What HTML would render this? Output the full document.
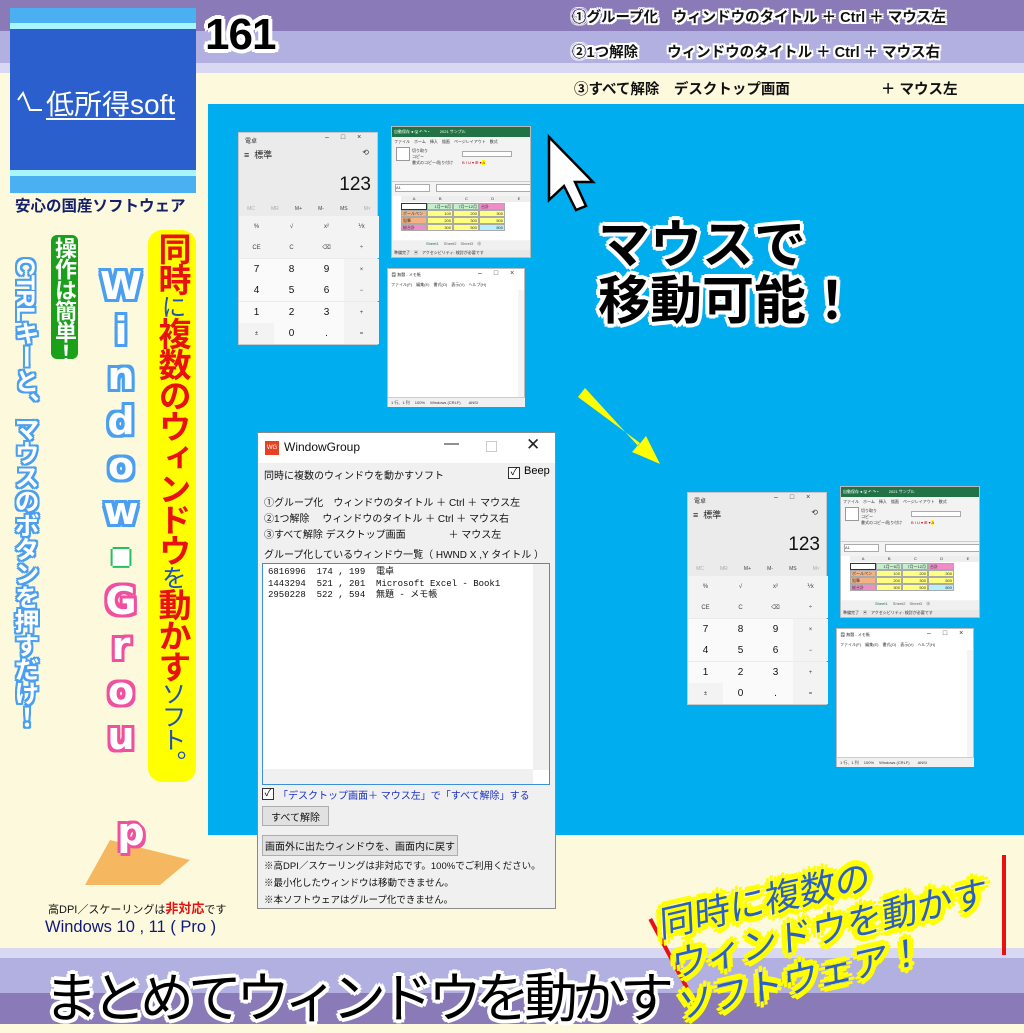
<!DOCTYPE html>
<html><head><meta charset="utf-8">
<style>
*{margin:0;padding:0;box-sizing:border-box}
body{width:1024px;height:1024px;overflow:hidden;position:relative;background:#fdf9dc;font-family:"Liberation Sans","Noto Sans CJK JP",sans-serif}
.a{position:absolute;white-space:nowrap}
.wo{text-shadow:2px 0 #fff,-2px 0 #fff,0 2px #fff,0 -2px #fff,2px 2px #fff,-2px -2px #fff,2px -2px #fff,-2px 2px #fff}
.wo3{text-shadow:3px 0 #fff,-3px 0 #fff,0 3px #fff,0 -3px #fff,3px 3px #fff,-3px -3px #fff,3px -3px #fff,-3px 3px #fff,4px 0 #fff,-4px 0 #fff,0 4px #fff,0 -4px #fff}
.grp{position:absolute;width:300px;height:290px}
.calc{position:absolute;left:0;top:0;width:140px;height:213px;background:#ebebeb;border:1px solid #c8c8c8;font-size:6px;color:#333}
.cb{position:absolute;width:35px;height:21px;display:flex;align-items:center;justify-content:center;font-size:6px;color:#444}
.cb.n{background:#fafafa;font-size:10px;color:#111}
.cb.o{background:#f3f3f3}
.xl{position:absolute;left:153px;top:-6px;width:140px;height:132px;background:#f3f3f3;border:1px solid #bbb;overflow:hidden;font-size:4px;color:#333}
.cell{position:absolute;height:7px;border:0.5px solid #aaa;font-size:4px;line-height:6px;padding:0 1px;text-align:right}
.np{position:absolute;left:149px;top:136px;width:138px;height:139px;background:#fff;border:1px solid #bbb;font-size:4px;color:#333}
.ctl{font-size:7px;letter-spacing:12px}
.dl{font-size:10px;color:#111;position:absolute;left:6px;white-space:pre}
.btn{position:absolute;background:#e1e1e1;border:1px solid #adadad;font-size:10px;display:flex;align-items:center;justify-content:center;color:#111;white-space:nowrap}
</style></head><body>
<div class="a" style="left:0;top:0;width:1024px;height:31px;background:#8a7ab8"></div>
<div class="a" style="left:0;top:31px;width:1024px;height:32px;background:#b2b0e0"></div>
<div class="a" style="left:0;top:63px;width:1024px;height:10px;background:#d8d8f2"></div>
<div class="a" style="left:0;top:948px;width:1024px;height:10px;background:#d8d8f2"></div>
<div class="a" style="left:0;top:958px;width:1024px;height:35px;background:#b2b0e0"></div>
<div class="a" style="left:0;top:993px;width:1024px;height:31px;background:#8a7ab8"></div>

<div class="a" style="left:10px;top:8px;width:186px;height:185px;background:#4ab0f2"></div>
<div class="a" style="left:10px;top:23px;width:186px;height:6px;background:#a8f4ff"></div>
<div class="a" style="left:10px;top:29px;width:186px;height:141px;background:#2b5fcd"></div>
<div class="a" style="left:10px;top:170px;width:186px;height:6px;background:#a8f4ff"></div>
<svg class="a" style="left:16px;top:88px" width="28" height="26"><path d="M2 12 L7 5 L14 22 L26 22" fill="none" stroke="#fff" stroke-width="2"/></svg>
<div class="a" style="left:46px;top:83px;color:#fff;font-size:28px;text-decoration:underline;text-underline-offset:4px;text-decoration-thickness:2px">低所得soft</div>
<div class="a" style="left:15px;top:194px;color:#15206a;font-size:15.5px;font-weight:bold">安心の国産ソフトウェア</div>

<div class="a wo3" style="left:205px;top:10px;font-size:44px;font-weight:bold;color:#000;letter-spacing:-1px">161</div>

<div class="a wo" style="left:572px;top:6px;font-size:14.5px;font-weight:bold;color:#111;white-space:pre">①グループ化　ウィンドウのタイトル ＋ Ctrl ＋ マウス左</div>
<div class="a wo" style="left:572px;top:41px;font-size:14.5px;font-weight:bold;color:#111;white-space:pre">②1つ解除　　ウィンドウのタイトル ＋ Ctrl ＋ マウス右</div>
<div class="a" style="left:574px;top:78px;font-size:14.5px;font-weight:bold;color:#111;white-space:pre">③すべて解除　デスクトップ画面　　　　　　 ＋ マウス左</div>

<div class="a" style="left:208px;top:104px;width:816px;height:731px;background:#00adef"></div>

<div class="grp" style="left:238px;top:132px">
 <div class="calc">
  <div class="a" style="left:6px;top:3px">電卓</div>
  <div class="a ctl" style="left:86px;top:1px">–□×</div>
  <div class="a" style="left:5px;top:15px;font-size:9px;color:#222">≡&nbsp; 標準</div>
  <div class="a" style="right:8px;top:15px;font-size:8px">⟲</div>
  <div class="a" style="right:6px;top:41px;font-size:19px;color:#111">123</div>
  <div class="a" style="left:0;top:73px;width:140px;font-size:5px;display:flex;justify-content:space-around;color:#444"><span style="color:#aaa">MC</span><span style="color:#aaa">MR</span><span>M+</span><span>M-</span><span>MS</span><span style="color:#aaa">M˅</span></div>
  <div class="cb o" style="left:0;top:83px">%</div><div class="cb o" style="left:35px;top:83px">√</div><div class="cb o" style="left:70px;top:83px">x²</div><div class="cb o" style="left:105px;top:83px">⅟x</div>
  <div class="cb o" style="left:0;top:104px">CE</div><div class="cb o" style="left:35px;top:104px">C</div><div class="cb o" style="left:70px;top:104px">⌫</div><div class="cb o" style="left:105px;top:104px">÷</div>
  <div class="cb n" style="left:0;top:126px">7</div><div class="cb n" style="left:35px;top:126px">8</div><div class="cb n" style="left:70px;top:126px">9</div><div class="cb o" style="left:105px;top:126px">×</div>
  <div class="cb n" style="left:0;top:147px">4</div><div class="cb n" style="left:35px;top:147px">5</div><div class="cb n" style="left:70px;top:147px">6</div><div class="cb o" style="left:105px;top:147px">−</div>
  <div class="cb n" style="left:0;top:169px">1</div><div class="cb n" style="left:35px;top:169px">2</div><div class="cb n" style="left:70px;top:169px">3</div><div class="cb o" style="left:105px;top:169px">+</div>
  <div class="cb o" style="left:0;top:190px">±</div><div class="cb n" style="left:35px;top:190px">0</div><div class="cb n" style="left:70px;top:190px">.</div><div class="cb o" style="left:105px;top:190px">=</div>
 </div>
 <div class="xl">
  <div class="a" style="left:0;top:0;width:140px;height:10px;background:#217346;color:#fff;padding:2px">自動保存 ● 🖫 ↶ ↷ ▾ 　　 2021 サンプル</div>
  <div class="a" style="left:2px;top:12px">ファイル　ホーム　挿入　描画　ページレイアウト　数式</div>
  <div class="a" style="left:4px;top:20px;width:14px;height:14px;border:1px solid #999;background:#fff"></div>
  <div class="a" style="left:20px;top:21px;line-height:6px">切り取り<br>コピー<br>書式のコピー/貼り付け</div>
  <div class="a" style="left:70px;top:24px;width:50px;height:6px;border:0.5px solid #aaa;background:#fff"></div>
  <div class="a" style="left:70px;top:33px;color:#c00">B I U ▾ ⊞ ▾ <span style="background:#ff0">A</span></div>
  <div class="a" style="left:0;top:54px;width:140px;height:0.5px;background:#ccc"></div>
  <div class="a" style="left:3px;top:57px;width:35px;height:8px;background:#fff;border:0.5px solid #aaa">A1</div>
  <div class="a" style="left:44px;top:57px;width:96px;height:8px;background:#fff;border:0.5px solid #aaa"></div>
  <div class="a" style="left:0;top:69px;width:140px;height:44px;background:#fff"></div>
  <div class="a" style="left:9px;top:69px;width:131px;height:6px;background:#eee;font-size:4px;display:flex;justify-content:space-around"><span>A</span><span>B</span><span>C</span><span>D</span><span>E</span></div>
  <div class="cell" style="left:9px;top:76px;width:26px;background:#fff;border:1px solid #333"></div>
  <div class="cell" style="left:35px;top:76px;width:26px;background:#c6efce">1月〜6月</div>
  <div class="cell" style="left:61px;top:76px;width:26px;background:#c6efce">7月〜12月</div>
  <div class="cell" style="left:87px;top:76px;width:26px;background:#f08cc8;text-align:left">合計</div>
  <div class="cell" style="left:9px;top:83px;width:26px;background:#f4b183;text-align:left">ボールペン</div>
  <div class="cell" style="left:35px;top:83px;width:26px;background:#ffff80">100</div>
  <div class="cell" style="left:61px;top:83px;width:26px;background:#ffff80">200</div>
  <div class="cell" style="left:87px;top:83px;width:26px;background:#ffff80">300</div>
  <div class="cell" style="left:9px;top:90px;width:26px;background:#f4b183;text-align:left">鉛筆</div>
  <div class="cell" style="left:35px;top:90px;width:26px;background:#ffff80">200</div>
  <div class="cell" style="left:61px;top:90px;width:26px;background:#ffff80">300</div>
  <div class="cell" style="left:87px;top:90px;width:26px;background:#ffff80">500</div>
  <div class="cell" style="left:9px;top:97px;width:26px;background:#f08cc8;text-align:left">総合計</div>
  <div class="cell" style="left:35px;top:97px;width:26px;background:#ffff80">300</div>
  <div class="cell" style="left:61px;top:97px;width:26px;background:#ffff80">500</div>
  <div class="cell" style="left:87px;top:97px;width:26px;background:#b4f0ff">800</div>
  <div class="a" style="left:0;top:114px;width:140px;height:9px;background:#f0f0f0;padding-left:34px;color:#217346">Sheet1 <span style="color:#666">　Sheet2　Sheet3　⊕</span></div>
  <div class="a" style="left:0;top:123px;width:140px;height:9px;background:#e8e8e8;padding-left:2px">準備完了　▣　アクセシビリティ: 検討が必要です</div>
 </div>
 <div class="np">
  <div class="a" style="left:3px;top:3px">🗒 無題 - メモ帳</div>
  <div class="a ctl" style="left:90px;top:1px">–□×</div>
  <div class="a" style="left:3px;top:13px">ファイル(F)　編集(E)　書式(O)　表示(V)　ヘルプ(H)</div>
  <div class="a" style="right:0;top:21px;width:6px;height:107px;background:#f4f4f4"></div>
  <div class="a" style="left:0;top:128px;width:137px;height:10px;background:#f0f0f0;border-top:0.5px solid #ccc;padding:2px 3px;white-space:pre">1 行、1 列　 100%　 Windows (CRLF)　　ANSI</div>
 </div>
</div>
<div class="grp" style="left:687px;top:492px;clip-path:inset(-10px 7px -10px -10px)">
 <div class="calc">
  <div class="a" style="left:6px;top:3px">電卓</div>
  <div class="a ctl" style="left:86px;top:1px">–□×</div>
  <div class="a" style="left:5px;top:15px;font-size:9px;color:#222">≡&nbsp; 標準</div>
  <div class="a" style="right:8px;top:15px;font-size:8px">⟲</div>
  <div class="a" style="right:6px;top:41px;font-size:19px;color:#111">123</div>
  <div class="a" style="left:0;top:73px;width:140px;font-size:5px;display:flex;justify-content:space-around;color:#444"><span style="color:#aaa">MC</span><span style="color:#aaa">MR</span><span>M+</span><span>M-</span><span>MS</span><span style="color:#aaa">M˅</span></div>
  <div class="cb o" style="left:0;top:83px">%</div><div class="cb o" style="left:35px;top:83px">√</div><div class="cb o" style="left:70px;top:83px">x²</div><div class="cb o" style="left:105px;top:83px">⅟x</div>
  <div class="cb o" style="left:0;top:104px">CE</div><div class="cb o" style="left:35px;top:104px">C</div><div class="cb o" style="left:70px;top:104px">⌫</div><div class="cb o" style="left:105px;top:104px">÷</div>
  <div class="cb n" style="left:0;top:126px">7</div><div class="cb n" style="left:35px;top:126px">8</div><div class="cb n" style="left:70px;top:126px">9</div><div class="cb o" style="left:105px;top:126px">×</div>
  <div class="cb n" style="left:0;top:147px">4</div><div class="cb n" style="left:35px;top:147px">5</div><div class="cb n" style="left:70px;top:147px">6</div><div class="cb o" style="left:105px;top:147px">−</div>
  <div class="cb n" style="left:0;top:169px">1</div><div class="cb n" style="left:35px;top:169px">2</div><div class="cb n" style="left:70px;top:169px">3</div><div class="cb o" style="left:105px;top:169px">+</div>
  <div class="cb o" style="left:0;top:190px">±</div><div class="cb n" style="left:35px;top:190px">0</div><div class="cb n" style="left:70px;top:190px">.</div><div class="cb o" style="left:105px;top:190px">=</div>
 </div>
 <div class="xl">
  <div class="a" style="left:0;top:0;width:140px;height:10px;background:#217346;color:#fff;padding:2px">自動保存 ● 🖫 ↶ ↷ ▾ 　　 2021 サンプル</div>
  <div class="a" style="left:2px;top:12px">ファイル　ホーム　挿入　描画　ページレイアウト　数式</div>
  <div class="a" style="left:4px;top:20px;width:14px;height:14px;border:1px solid #999;background:#fff"></div>
  <div class="a" style="left:20px;top:21px;line-height:6px">切り取り<br>コピー<br>書式のコピー/貼り付け</div>
  <div class="a" style="left:70px;top:24px;width:50px;height:6px;border:0.5px solid #aaa;background:#fff"></div>
  <div class="a" style="left:70px;top:33px;color:#c00">B I U ▾ ⊞ ▾ <span style="background:#ff0">A</span></div>
  <div class="a" style="left:0;top:54px;width:140px;height:0.5px;background:#ccc"></div>
  <div class="a" style="left:3px;top:57px;width:35px;height:8px;background:#fff;border:0.5px solid #aaa">A1</div>
  <div class="a" style="left:44px;top:57px;width:96px;height:8px;background:#fff;border:0.5px solid #aaa"></div>
  <div class="a" style="left:0;top:69px;width:140px;height:44px;background:#fff"></div>
  <div class="a" style="left:9px;top:69px;width:131px;height:6px;background:#eee;font-size:4px;display:flex;justify-content:space-around"><span>A</span><span>B</span><span>C</span><span>D</span><span>E</span></div>
  <div class="cell" style="left:9px;top:76px;width:26px;background:#fff;border:1px solid #333"></div>
  <div class="cell" style="left:35px;top:76px;width:26px;background:#c6efce">1月〜6月</div>
  <div class="cell" style="left:61px;top:76px;width:26px;background:#c6efce">7月〜12月</div>
  <div class="cell" style="left:87px;top:76px;width:26px;background:#f08cc8;text-align:left">合計</div>
  <div class="cell" style="left:9px;top:83px;width:26px;background:#f4b183;text-align:left">ボールペン</div>
  <div class="cell" style="left:35px;top:83px;width:26px;background:#ffff80">100</div>
  <div class="cell" style="left:61px;top:83px;width:26px;background:#ffff80">200</div>
  <div class="cell" style="left:87px;top:83px;width:26px;background:#ffff80">300</div>
  <div class="cell" style="left:9px;top:90px;width:26px;background:#f4b183;text-align:left">鉛筆</div>
  <div class="cell" style="left:35px;top:90px;width:26px;background:#ffff80">200</div>
  <div class="cell" style="left:61px;top:90px;width:26px;background:#ffff80">300</div>
  <div class="cell" style="left:87px;top:90px;width:26px;background:#ffff80">500</div>
  <div class="cell" style="left:9px;top:97px;width:26px;background:#f08cc8;text-align:left">総合計</div>
  <div class="cell" style="left:35px;top:97px;width:26px;background:#ffff80">300</div>
  <div class="cell" style="left:61px;top:97px;width:26px;background:#ffff80">500</div>
  <div class="cell" style="left:87px;top:97px;width:26px;background:#b4f0ff">800</div>
  <div class="a" style="left:0;top:114px;width:140px;height:9px;background:#f0f0f0;padding-left:34px;color:#217346">Sheet1 <span style="color:#666">　Sheet2　Sheet3　⊕</span></div>
  <div class="a" style="left:0;top:123px;width:140px;height:9px;background:#e8e8e8;padding-left:2px">準備完了　▣　アクセシビリティ: 検討が必要です</div>
 </div>
 <div class="np">
  <div class="a" style="left:3px;top:3px">🗒 無題 - メモ帳</div>
  <div class="a ctl" style="left:90px;top:1px">–□×</div>
  <div class="a" style="left:3px;top:13px">ファイル(F)　編集(E)　書式(O)　表示(V)　ヘルプ(H)</div>
  <div class="a" style="right:0;top:21px;width:6px;height:107px;background:#f4f4f4"></div>
  <div class="a" style="left:0;top:128px;width:137px;height:10px;background:#f0f0f0;border-top:0.5px solid #ccc;padding:2px 3px;white-space:pre">1 行、1 列　 100%　 Windows (CRLF)　　ANSI</div>
 </div>
</div>

<svg class="a" style="left:540px;top:130px" width="140" height="345" viewBox="0 0 140 345">
 <path d="M9 7 L9 70 L24 56 L36 80 L46 76 L35 52 L53 52 Z" fill="#fff" stroke="#000" stroke-width="2.5"/>
 <path d="M38 267 L100 313 L92 322 L120 334 L106 306 L98 316 L45 258 Z" fill="#ffff00"/>
</svg>
<div class="a wo3" style="left:598px;top:218px;font-size:52px;font-weight:bold;color:#000;line-height:56px">マウスで<br>移動可能！</div>

<div class="a" style="left:51px;top:235px;width:27px;height:124px;background:#1aa01a;border-radius:6px"></div>
<div class="a" style="left:52px;top:237px;writing-mode:vertical-rl;font-size:22px;font-weight:bold;color:#fff;line-height:25px;letter-spacing:-1px">操作は簡単！</div>
<div class="a" style="left:10px;top:258px;writing-mode:vertical-rl;font-size:25px;font-weight:bold;color:#fff;line-height:30px;letter-spacing:-1px;text-shadow:2px 0 #4a9ff0,-2px 0 #4a9ff0,0 2px #4a9ff0,0 -2px #4a9ff0,2px 2px #4a9ff0,-2px -2px #4a9ff0,2px -2px #4a9ff0,-2px 2px #4a9ff0">CTRLキーと、マウスのボタンを押すだけ！</div>

<div class="a" style="left:98px;top:264px;width:46px;font-family:'DejaVu Sans',sans-serif;font-weight:bold;font-size:38px;line-height:45px;text-align:center;color:#fff">
<div style="text-shadow:3px 0 #4a9ff0,-3px 0 #4a9ff0,0 3px #4a9ff0,0 -3px #4a9ff0,3px 3px #4a9ff0,-3px -3px #4a9ff0,3px -3px #4a9ff0,-3px 3px #4a9ff0">W<br>i<br>n<br>d<br>o<br>w</div>
<div style="font-size:22px;text-shadow:2px 0 #22c060,-2px 0 #22c060,0 2px #22c060,0 -2px #22c060">■</div>
<div style="text-shadow:3px 0 #f050a0,-3px 0 #f050a0,0 3px #f050a0,0 -3px #f050a0,3px 3px #f050a0,-3px -3px #f050a0,3px -3px #f050a0,-3px 3px #f050a0">G<br>r<br>o<br>u</div>
</div>
<svg class="a" style="left:80px;top:830px" width="120" height="60"><path d="M30 10 L110 30 L80 55 L5 55 Z" fill="#f5b860"/></svg>
<div class="a" style="left:108px;top:810px;width:46px;font-family:'DejaVu Sans',sans-serif;font-weight:bold;font-size:38px;text-align:center;color:#fff;text-shadow:3px 0 #f050a0,-3px 0 #f050a0,0 3px #f050a0,0 -3px #f050a0,3px 3px #f050a0,-3px -3px #f050a0">p</div>

<div class="a" style="left:148px;top:230px;width:48px;height:552px;background:#ffff00;border-radius:14px"></div>
<div class="a" style="left:153px;top:232px;writing-mode:vertical-rl;font-size:33px;font-weight:bold;color:#e81010;line-height:38px;letter-spacing:-2px">同時<span style="color:#2050c0;font-size:25px;font-weight:normal">に</span>複数のウィンドウ<span style="color:#2050c0;font-size:25px;font-weight:normal">を</span>動かす<span style="color:#2050c0;font-size:25px;font-weight:normal">ソフト。</span></div>

<div class="a" style="left:48px;top:898px;font-size:11px;color:#111">高DPI／スケーリングは<span style="color:#e81010;font-size:13px;font-weight:bold">非対応</span>です</div>
<div class="a" style="left:45px;top:918px;font-size:16.5px;color:#101880">Windows 10 , 11 ( Pro )</div>

<div class="a" style="left:257px;top:432px;width:299px;height:477px;background:#f0f0f0;border:1px solid #8a8a8a">
 <div class="a" style="left:0;top:0;width:297px;height:30px;background:#fff"></div>
 <div class="a" style="left:7px;top:8px;width:14px;height:14px;background:#e84020;color:#fff;font-size:6px;text-align:center;line-height:14px">WG</div>
 <div class="a" style="left:26px;top:7px;font-size:12px;color:#111">WindowGroup</div>
 <div class="a" style="left:186px;top:2px;font-size:15px;color:#222">—</div>
 <div class="a" style="left:228px;top:8px;width:11px;height:11px;border:1px solid #ccc"></div>
 <div class="a" style="left:268px;top:2px;font-size:17px;color:#222">✕</div>
 <div class="dl" style="top:34px">同時に複数のウィンドウを動かすソフト</div>
 <div class="a" style="left:250px;top:34px;width:12px;height:12px;border:1px solid #333;background:#fff;font-size:10px;line-height:10px;text-align:center">✓</div>
 <div class="a" style="left:266px;top:32px;font-size:11px">Beep</div>
 <div class="dl" style="top:61px">①グループ化　ウィンドウのタイトル ＋ Ctrl ＋ マウス左</div>
 <div class="dl" style="top:77px">②1つ解除　 ウィンドウのタイトル ＋ Ctrl ＋ マウス右</div>
 <div class="dl" style="top:93px">③すべて解除 デスクトップ画面　　　　 ＋ マウス左</div>
 <div class="dl" style="top:113px">グループ化しているウィンドウ一覧（ HWND X ,Y タイトル ）</div>
 <div class="a" style="left:4px;top:130px;width:288px;height:222px;background:#fff;border:1px solid #3c8fd8">
  <div class="a" style="left:5px;top:3px;font-family:'Liberation Mono','Noto Sans CJK JP',monospace;font-size:9px;line-height:11.5px;white-space:pre;color:#111">6816996  174 , 199  電卓
1443294  521 , 201  Microsoft Excel - Book1
2950228  522 , 594  無題 - メモ帳</div>
  <div class="a" style="right:0;top:0;width:16px;height:206px;background:#f0f0f0"></div>
  <div class="a" style="left:0;bottom:0;width:270px;height:15px;background:#f0f0f0"></div>
 </div>
 <div class="a" style="left:4px;top:355px;width:12px;height:12px;border:1px solid #333;background:#fff;font-size:10px;line-height:10px;text-align:center">✓</div>
 <div class="dl" style="left:20px;top:354px;color:#1a30c8">「デスクトップ画面＋ マウス左」で「すべて解除」する</div>
 <div class="btn" style="left:4px;top:373px;width:67px;height:20px">すべて解除</div>
 <div class="btn" style="left:4px;top:402px;width:196px;height:21px">画面外に出たウィンドウを、画面内に戻す</div>
 <div class="dl" style="top:425px;font-size:9.5px">※高DPI／スケーリングは非対応です。100%でご利用ください。</div>
 <div class="dl" style="top:442px;font-size:9.5px">※最小化したウィンドウは移動できません。</div>
 <div class="dl" style="top:459px;font-size:9.5px">※本ソフトウェアはグループ化できません。</div>
</div>

<div class="a wo3" style="left:44px;top:954px;font-size:54px;color:#000;letter-spacing:-6px">まとめてウィンドウを動かす</div>

<div class="a" style="left:652px;top:918px;height:4px;background:#e81010;transform:rotate(62deg);transform-origin:0 0;width:102px"></div>
<div class="a" style="left:1002px;top:855px;width:4px;height:100px;background:#e81010"></div>
<div class="a" style="left:662px;top:905px;width:340px;transform:rotate(-13deg) skewX(-10deg);transform-origin:0 50%;font-size:36px;line-height:42px;color:#2a5ec8;text-shadow:4px 0 #ffff00,-4px 0 #ffff00,0 4px #ffff00,0 -4px #ffff00,4px 4px #ffff00,-4px -4px #ffff00,4px -4px #ffff00,-4px 4px #ffff00,6px 0 #ffff00,-6px 0 #ffff00,0 6px #ffff00,0 -6px #ffff00">
<div>同時に複数の</div>
<div style="margin-left:10px">ウィンドウを動かす</div>
<div style="margin-left:14px">ソフトウェア！</div>
</div>
</body></html>
